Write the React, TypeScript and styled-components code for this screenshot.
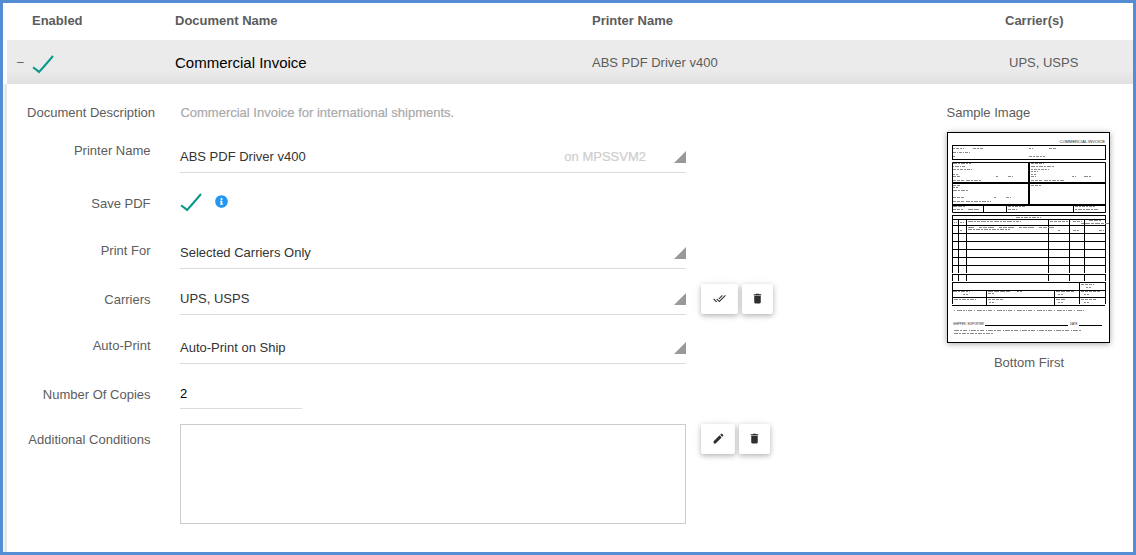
import React from "react";
import styled, { createGlobalStyle, css } from "styled-components";
import { MdDelete, MdDoneAll, MdEdit } from "react-icons/md";
import { FaInfoCircle } from "react-icons/fa";

const GlobalStyle = createGlobalStyle`
  * { box-sizing: border-box; }
  body {
    margin: 0;
    background: #fff;
    font-family: "Liberation Sans", Arial, sans-serif;
    font-size: 13px;
    line-height: 20px;
    color: #5c5c5c;
  }
`;

const Page = styled.main`
  display: flex;
  flex-direction: column;
  width: 1136px;
  height: 555px;
  border: 3px solid #548dd4;
  background: #fff;
  overflow: hidden;
`;

const rowColumns = css`
  display: grid;
  grid-template-columns: 25px 143px 417px 413px 1fr;
  align-items: center;
  margin-left: 4px;
`;

const HeaderRow = styled.header`
  ${rowColumns}
  height: 37px;
  padding-bottom: 2px;
  font-weight: bold;
`;

const DocumentRow = styled.div`
  ${rowColumns}
  height: 44px;
  padding-top: 2px;
  background: linear-gradient(#ebebeb 0, #ebebeb 30px, #e0e0e0 44px);
`;

const Toggle = styled.span`
  padding: 0 0 3px 10px;
  font-size: 12px;
`;

const DocumentName = styled.span`
  color: #000;
  font-size: 15px;
`;

const RowCarriers = styled.span`
  padding-left: 4px;
`;

const CheckMark = styled.svg`
  display: block;
  width: 22px;
  height: 19px;
  fill: none;
  stroke: #0b998b;
  stroke-width: 2;
`;

const RowCheck = styled(CheckMark)`
  margin-top: 3px;
`;

const Details = styled.section`
  display: flex;
  flex: 1;
  background: linear-gradient(90deg, #f4f4f4 0, #f4f4f4 1px, #e6e6e6 2px, #e4e4e4 4px, #fff 4px);
  padding-left: 4px;
`;

const Form = styled.div`
  width: 939.5px;
`;

const FormRow = styled.div<{ $height: number }>`
  display: flex;
  align-items: flex-end;
  height: ${(p) => p.$height}px;
`;

const Label = styled.label<{ $top: number; $wide?: boolean }>`
  align-self: flex-start;
  width: ${(p) => (p.$wide ? 148 : 143.5)}px;
  margin-right: ${(p) => (p.$wide ? 25.4 : 29.5)}px;
  padding-top: ${(p) => p.$top}px;
  text-align: right;
  white-space: nowrap;
`;

const Description = styled.p`
  align-self: flex-start;
  margin: 0;
  padding-top: 19px;
  color: #a9a9a9;
  -webkit-text-stroke: 0.2px #a9a9a9;
`;

const Select = styled.div`
  display: flex;
  justify-content: space-between;
  width: 506px;
  height: 26px;
  border-bottom: 1px solid #dcdcdc;
  color: #333;
`;

const Corner = styled.span`
  width: 12px;
  height: 12px;
  margin-top: 4px;
  background: #999;
  clip-path: polygon(100% 0, 100% 100%, 0 100%);
`;

const Host = styled.span`
  margin-left: auto;
  margin-right: 28px;
  color: #cecece;
  -webkit-text-stroke: 0.2px #cecece;
`;

const Copies = styled.div`
  width: 122px;
  height: 25px;
  border-bottom: 1px solid #dcdcdc;
  color: #000;
`;

const Conditions = styled.div`
  width: 506px;
  height: 100px;
  border: 1px solid #ccc;
`;

const SaveOptions = styled.div`
  display: flex;
  align-items: flex-start;
  gap: 13.5px;
  align-self: flex-start;
  margin-left: -0.5px;
  padding-top: 20px;
`;

const InfoIcon = styled(FaInfoCircle)`
  margin-top: 2px;
  color: #2196f3;
`;

const Actions = styled.div<{ $top?: boolean }>`
  display: flex;
  gap: 4px;
  margin-left: 15px;
  align-self: ${(p) => (p.$top ? "flex-start" : "flex-end")};
  margin-top: ${(p) => (p.$top ? 15 : 0)}px;
  margin-bottom: ${(p) => (p.$top ? 0 : 1)}px;
`;

const ActionButton = styled.button<{ $width: number }>`
  display: flex;
  align-items: center;
  justify-content: center;
  width: ${(p) => p.$width}px;
  height: 30px;
  padding: 0 0 2px;
  border: 0;
  border-radius: 2px;
  background: #fff;
  color: #2e2e2e;
  box-shadow: 0 2px 5px rgba(0, 0, 0, 0.22), 0 1px 8px rgba(0, 0, 0, 0.1);
`;

const Sample = styled.aside`
  display: flex;
  flex-direction: column;
  width: 165px;
  padding-top: 19px;
`;

const SamplePage = styled.svg`
  display: block;
  width: 163px;
  height: 211px;
  margin: 9px 0 0 0.5px;
  background: #fff;
  box-shadow: 0 1px 6px rgba(0, 0, 0, 0.35);
`;

const SampleCaption = styled.span`
  padding-top: 10px;
  text-align: center;
`;

const Tick = () => <path d="M1 12.3 Q4.5 14.5 7 17 Q13 10.5 21 1" />;

/* [x, y, width, dash pattern] for each line of small print */
const smallPrint: [number, number, number, string][] = [
  [6, 16.5, 11, "2 1 3 1"], [26, 16.5, 10, "3 1 2 1"], [82, 16.5, 4, "2 1"], [102, 16.5, 8, "3 1"],
  [6, 20.5, 18, "3 1 1 1"], [6, 24.5, 3, "2 1"], [82, 24.5, 16, "3 1 2 1"],
  [6, 31.5, 18, "4 1 2 1"], [84, 31.5, 13, "3 1"], [6, 34.5, 12, "1 1 4 1"], [84, 34.5, 24, "4 1 2 1"],
  [6, 37.5, 19, "3 1 2 1"], [84, 37.5, 18, "2 1 3 1"], [84, 39.5, 7, "2 1"],
  [6, 42.5, 5, "2 1"], [84, 42.5, 5, "2 1"], [6, 44.5, 8, "3 1"], [49, 44.5, 2, "2 1"],
  [61, 44.5, 5, "3 1"], [84, 44.5, 5, "3 1"], [125, 44.5, 4, "2 1"], [137, 44.5, 7, "4 1"],
  [6, 48.5, 11, "3 1"], [19, 48.5, 15, "4 1 2 1"], [84, 48.5, 11, "3 1"], [97, 48.5, 20, "4 1 2 1"],
  [6, 53.5, 7, "3 1"], [84, 53.5, 10, "3 1"], [6, 55.5, 5, "2 1"], [6, 58.5, 15, "4 1 2 1"],
  [6, 65.5, 11, "3 1"], [47, 65.5, 2, "2 1"], [59, 65.5, 5, "3 1"],
  [6, 69.5, 11, "3 1"], [19, 69.5, 25, "4 1 2 1"],
  [6, 74.5, 12, "4 1"], [61, 74.5, 18, "3 1 2 1"], [128, 74.5, 20, "3 1 2 1"],
  [6, 77.5, 10, "3 1"], [21, 77.5, 12, "5 1"], [61, 77.5, 9, "3 1"], [128, 77.5, 24, "2 1 4 1"],
  [69, 85.5, 25, "4 1 2 1"], [21, 89.5, 53, "5 1 2 1 3 1"], [103, 89.5, 18, "3 1"], [126, 89.5, 9, "3 1"],
  [142, 88.5, 12, "4 1"], [134, 91.5, 28, "3 1 5 1"], [7, 90.5, 3, "1 1"], [13, 90.5, 4, "2 1"],
  [21, 95.5, 89, "6 5 3 1 4 1"], [21, 97.5, 42, "4 1 2 1"], [13, 98.5, 2, "2 1"], [111, 98.5, 3, "2 1"],
  [126, 98.5, 6, "3 1"], [152, 98.5, 5, "3 1"],
  [134, 152.5, 13, "3 1"], [139, 155.5, 5, "2 1"], [6, 159.5, 17, "4 1 2 1"], [41, 159.5, 22, "5 1"],
  [70, 159.5, 5, "2 1"], [109, 159.5, 18, "4 1"], [134, 159.5, 20, "3 1"], [16, 162.5, 5, "2 1"],
  [41, 161.5, 6, "3 1"], [111, 162.5, 5, "2 1"], [137, 162.5, 5, "2 1"],
  [7, 167.5, 22, "4 1 2 1"], [41, 167.5, 15, "3 1"], [109, 167.5, 10, "4 1"], [134, 167.5, 15, "3 1"],
  [42, 170.5, 5, "2 1"], [111, 170.5, 5, "2 1"], [137, 170.5, 5, "2 1"],
  [7, 178.5, 130, "1 2 5 1 2 1 1 1 4 2"], [7, 198.5, 127, "5 1 2 1 4 2 1 1"], [7, 201.5, 39, "4 1 2 1"],
];

const InvoiceSheet = () => (
  <SamplePage viewBox="0 0 163 211" fontFamily="Liberation Sans, Arial, sans-serif" fill="#222">
    <g fill="none" stroke="#000">
      <rect x="0.5" y="0.5" width="162" height="210" />
      <rect x="5.5" y="13.5" width="153" height="14" />
      <path d="M5.5 30.5H158.5V80.5H5.5Z M36.5 73V80 M59.5 73V80 M126.5 73V80" />
      <path strokeWidth="2" d="M5 51H159 M5 73H159 M82 30V73" />
      <path d="M5 83.5H159 M5 87.5H159 M5 93.5H159 M5 101.5H159 M5 109.5H159 M5 117.5H159 M5 125.5H159 M5 133.5H159 M5 142.5H159 M5 150.5H159 M5 158.5H159 M5 165.5H159 M5 173.5H158" />
      <path d="M5.5 83V141 M158.5 83V141 M11.5 87V141 M19.5 87V141 M101.5 87V141 M122.5 87V141 M137.5 87V141" />
      <path d="M5.5 142V149 M11.5 142V149 M19.5 142V149 M101.5 142V149 M122.5 142V149 M137.5 142V149 M158.5 142V149" />
      <path d="M5.5 150V172 M158.5 150V172 M132.5 150V172 M39.5 158V173 M107.5 158V173 M38 193.5H121 M132 193.5H155" />
    </g>
    <g stroke="#8a8a8a">
      {smallPrint.map(([x, y, w, dash], i) => (
        <line key={i} x1={x} y1={y} x2={x + w} y2={y} strokeDasharray={dash} />
      ))}
    </g>
    <text x="158" y="11.3" fontSize="4.1" textAnchor="end">COMMERCIAL INVOICE</text>
    <text x="6" y="193" fontSize="2.9">SHIPPER / EXPORTER</text>
    <text x="123" y="193" fontSize="2.9">DATE</text>
  </SamplePage>
);

type SelectRowProps = {
  label: string;
  value: string;
  height: number;
  labelTop: number;
  host?: string;
  children?: React.ReactNode;
};

const SelectRow = ({ label, value, height, labelTop, host, children }: SelectRowProps) => (
  <FormRow $height={height}>
    <Label $top={labelTop}>{label}</Label>
    <Select>
      <span>{value}</span>
      {host && <Host>{host}</Host>}
      <Corner />
    </Select>
    {children}
  </FormRow>
);

export default function App() {
  return (
    <Page>
      <GlobalStyle />
      <HeaderRow>
        <span />
        <span>Enabled</span>
        <span>Document Name</span>
        <span>Printer Name</span>
        <span>Carrier(s)</span>
      </HeaderRow>
      <DocumentRow>
        <Toggle>–</Toggle>
        <RowCheck viewBox="0 0 22 19"><Tick /></RowCheck>
        <DocumentName>Commercial Invoice</DocumentName>
        <span>ABS PDF Driver v400</span>
        <RowCarriers>UPS, USPS</RowCarriers>
      </DocumentRow>
      <Details>
        <Form>
          <FormRow $height={48}>
            <Label $top={19} $wide>Document Description</Label>
            <Description>Commercial Invoice for international shipments.</Description>
          </FormRow>
          <SelectRow label="Printer Name" value="ABS PDF Driver v400" host="on MPSSVM2" height={41} labelTop={9} />
          <FormRow $height={59}>
            <Label $top={21}>Save PDF</Label>
            <SaveOptions>
              <CheckMark viewBox="0 0 22 19"><Tick /></CheckMark>
              <InfoIcon size={13} />
            </SaveOptions>
          </FormRow>
          <SelectRow label="Print For" value="Selected Carriers Only" height={37} labelTop={9} />
          <SelectRow label="Carriers" value="UPS, USPS" height={46} labelTop={21}>
            <Actions>
              <ActionButton $width={37} aria-label="Select all carriers"><MdDoneAll size={13} /></ActionButton>
              <ActionButton $width={31} aria-label="Clear carriers"><MdDelete size={13} /></ActionButton>
            </Actions>
          </SelectRow>
          <SelectRow label="Auto-Print" value="Auto-Print on Ship" height={49} labelTop={21} />
          <FormRow $height={45}>
            <Label $top={21}>Number Of Copies</Label>
            <Copies>2</Copies>
          </FormRow>
          <FormRow $height={115}>
            <Label $top={21}>Additional Conditions</Label>
            <Conditions />
            <Actions $top>
              <ActionButton $width={34} aria-label="Edit conditions"><MdEdit size={13} /></ActionButton>
              <ActionButton $width={31} aria-label="Clear conditions"><MdDelete size={13} /></ActionButton>
            </Actions>
          </FormRow>
        </Form>
        <Sample>
          <span>Sample Image</span>
          <InvoiceSheet />
          <SampleCaption>Bottom First</SampleCaption>
        </Sample>
      </Details>
    </Page>
  );
}
